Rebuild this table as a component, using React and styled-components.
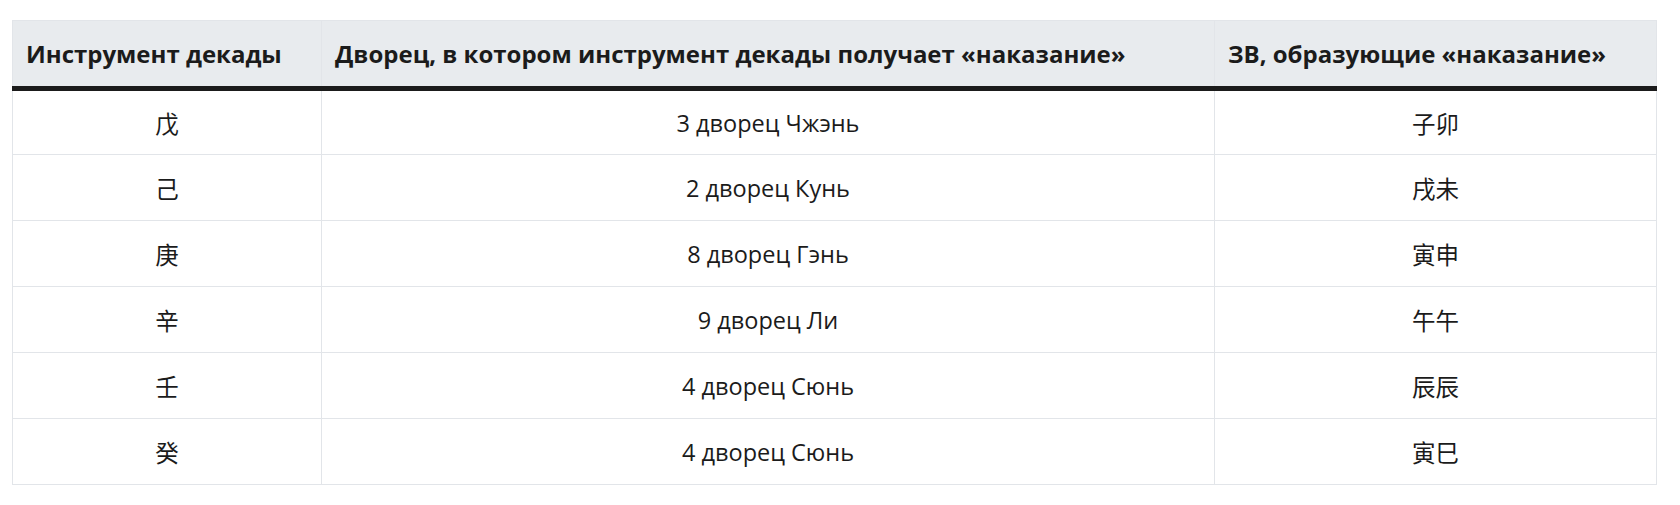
import styled, { createGlobalStyle } from "styled-components"

const GlobalStyle = createGlobalStyle`
    body {
        margin: 0;
        background: #ffffff;
        font-family: "Open Sans", "Noto Sans CJK SC", sans-serif;
        color: #1b1b1b;
    }
`

const Page = styled.div`
    padding: 20px 24px 19px 12px;
`

const Table = styled.table`
    width: 1644px;
    border-collapse: collapse;
    table-layout: fixed;
    font-size: 23.5px;
`

const HeadCell = styled.th`
    box-sizing: border-box;
    width: ${p => p.w}px;
    height: 68px;
    padding: 0 13px;
    background: #e8ebee;
    border: 1px solid #e2e5e9;
    border-bottom: 5px solid #1b1b1b;
    text-align: left;
    font-weight: 700;
    font-size: 24px;
    white-space: nowrap;
`

const Cell = styled.td`
    box-sizing: border-box;
    height: 66px;
    padding: 0 13px;
    border: 1px solid #e2e5e9;
    text-align: center;
    font-weight: 400;
`

const rows = [
    ["戊", "3 дворец Чжэнь", "子卯"],
    ["己", "2 дворец Кунь", "戌未"],
    ["庚", "8 дворец Гэнь", "寅申"],
    ["辛", "9 дворец Ли", "午午"],
    ["壬", "4 дворец Сюнь", "辰辰"],
    ["癸", "4 дворец Сюнь", "寅巳"],
]

const App = () => {
  return (
    <Page>
        <GlobalStyle/>
        <Table>
            <thead>
                <tr>
                    <HeadCell w={309}>Инструмент декады</HeadCell>
                    <HeadCell w={893}>Дворец, в котором инструмент декады получает «наказание»</HeadCell>
                    <HeadCell w={442}>ЗВ, образующие «наказание»</HeadCell>
                </tr>
            </thead>
            <tbody>
                {rows.map((r, i) => (
                    <tr key={i}>
                        {r.map((c, j) => <Cell key={j}>{c}</Cell>)}
                    </tr>
                ))}
            </tbody>
        </Table>
    </Page>
  )
}

export default App
